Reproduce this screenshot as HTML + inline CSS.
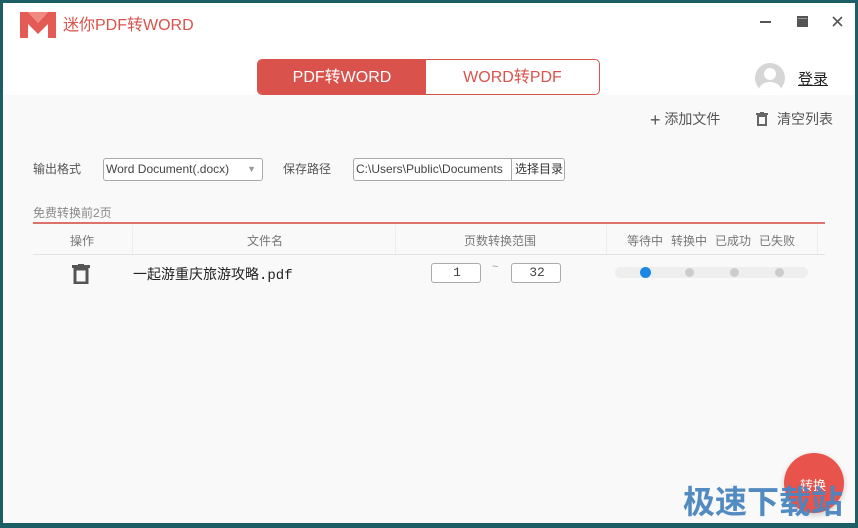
<!DOCTYPE html>
<html><head><meta charset="utf-8"><style>
*{margin:0;padding:0;box-sizing:border-box}
body{width:858px;height:528px;background:#1c5e66;font-family:"Liberation Sans","Noto Sans CJK SC",sans-serif;position:relative;overflow:hidden}
#win{position:absolute;left:3px;top:3px;width:852px;height:520px;background:#f9f9f9}
#top{position:absolute;left:0;top:0;width:852px;height:92px;background:#fff}
.a{position:absolute;white-space:nowrap}
.t{font-size:12px;color:#555}
.box{position:absolute;border:1px solid #aaa;border-radius:3px;background:#fff;font-size:12px;color:#444;line-height:20px;padding-left:2px;white-space:nowrap;overflow:hidden}
.dot{position:absolute;top:5px;width:10px;height:10px;border-radius:50%;background:#ccc}
</style></head><body><div id="win">
<div id="top">
 <svg class="a" style="left:17px;top:9px" width="36" height="26" viewBox="0 0 36 26"><path d="M0 0h8l10 11 10-11h8v26h-8V12l-10 10L8 12v14H0z" fill="#e45a54"/><path d="M8 0l10 11 10-11" fill="#f08a80"/></svg>
 <div class="a" style="left:60px;top:8px;font-size:16px;color:#d9524c">迷你PDF转WORD</div>
 <svg class="a" style="left:755px;top:12px" width="90" height="14"><rect x="2" y="6" width="11" height="2" fill="#555"/><rect x="39" y="1" width="11" height="11" fill="#555"/><rect x="40" y="3" width="9" height="1" fill="#999"/><path d="M75 2l9 9M84 2l-9 9" stroke="#555" stroke-width="1.6"/></svg>
 <div class="a" style="left:254px;top:56px;width:343px;height:36px;border:1px solid #d9534c;border-radius:5px;background:#fff;overflow:hidden">
  <div class="a" style="left:0;top:0;width:168px;height:34px;background:#d9534c;color:#fff;font-size:16px;text-align:center;line-height:36px">PDF转WORD</div>
  <div class="a" style="left:168px;top:0;width:173px;height:34px;color:#d9534c;font-size:16px;text-align:center;line-height:36px">WORD转PDF</div>
 </div>
 <div class="a" style="left:752px;top:60px;width:30px;height:30px;border-radius:50%;background:#d6d6d6;overflow:hidden"><div class="a" style="left:9px;top:5px;width:12px;height:12px;border-radius:50%;background:#fff"></div><div class="a" style="left:4px;top:19px;width:22px;height:16px;border-radius:50%;background:#fff"></div></div>
 <div class="a" style="left:795px;top:65px;font-size:15px;color:#222;text-decoration:underline">登录</div>
</div>
<div class="a" style="left:647px;top:106px;font-size:14px;color:#555"><span style="font-size:18px;color:#555;vertical-align:-2px">+</span> 添加文件</div>
<svg class="a" style="left:752px;top:109px" width="14" height="14"><rect x="1" y="1" width="12" height="2" fill="#666"/><rect x="5" y="0" width="4" height="2" fill="#666"/><path d="M3 4h8v9H3z" fill="none" stroke="#666" stroke-width="2"/></svg>
<div class="a" style="left:774px;top:106px;font-size:14px;color:#555">清空列表</div>
<div class="a t" style="left:30px;top:157px">输出格式</div>
<div class="box" style="left:100px;top:155px;width:160px;height:23px">Word Document(.docx)<span style="position:absolute;right:6px;top:0;color:#999;font-size:9px">▼</span></div>
<div class="a t" style="left:280px;top:157px">保存路径</div>
<div class="box" style="left:350px;top:155px;width:212px;height:23px">C:\Users\Public\Documents<span style="position:absolute;left:157px;top:0;width:54px;height:21px;border-left:1px solid #aaa;background:#fff;color:#333;padding-left:3px">选择目录</span></div>
<div class="a" style="left:30px;top:201px;font-size:12px;color:#888">免费转换前2页</div>
<div class="a" style="left:30px;top:219px;width:792px;height:2px;background:#d9736c"></div>
<div class="a" style="left:30px;top:251px;width:792px;height:1px;background:#e3e3e3"></div>
<div class="a" style="left:129px;top:222px;width:1px;height:29px;background:#eee"></div>
<div class="a" style="left:392px;top:222px;width:1px;height:29px;background:#eee"></div>
<div class="a" style="left:603px;top:222px;width:1px;height:29px;background:#eee"></div>
<div class="a" style="left:814px;top:222px;width:1px;height:29px;background:#eee"></div>
<div class="a t" style="left:67px;top:229px;color:#777">操作</div>
<div class="a t" style="left:244px;top:229px;color:#777">文件名</div>
<div class="a t" style="left:461px;top:229px;color:#777">页数转换范围</div>
<div class="a t" style="left:624px;top:229px;color:#777">等待中</div>
<div class="a t" style="left:668px;top:229px;color:#777">转换中</div>
<div class="a t" style="left:712px;top:229px;color:#777">已成功</div>
<div class="a t" style="left:756px;top:229px;color:#777">已失败</div>
<svg class="a" style="left:69px;top:261px" width="18" height="20"><rect x="0" y="1" width="18" height="3" fill="#555"/><rect x="6" y="0" width="6" height="2" fill="#555"/><path d="M3 5h12v14H3z" fill="none" stroke="#555" stroke-width="3"/></svg>
<div class="a" style="left:130px;top:261px;font-size:14px;color:#222;font-family:'Liberation Mono','Noto Sans CJK SC',monospace">一起游重庆旅游攻略.pdf</div>
<div class="box" style="left:428px;top:260px;width:50px;height:20px;text-align:center;line-height:18px;font-family:'Liberation Mono',monospace;font-size:13px">1</div>
<div class="a" style="left:489px;top:258px;font-size:11px;color:#999">~</div>
<div class="box" style="left:508px;top:260px;width:50px;height:20px;text-align:center;line-height:18px;font-family:'Liberation Mono',monospace;font-size:13px">32</div>
<div class="a" style="left:612px;top:264px;width:193px;height:11px;border-radius:6px;background:#eee">
 <div class="dot" style="left:25px;top:0;width:11px;height:11px;background:#1c87e4"></div>
 <div class="dot" style="left:70px;top:1px;width:9px;height:9px"></div>
 <div class="dot" style="left:115px;top:1px;width:9px;height:9px"></div>
 <div class="dot" style="left:160px;top:1px;width:9px;height:9px"></div>
</div>
<div class="a" style="left:781px;top:450px;width:60px;height:60px;border-radius:50%;background:#e8534c;box-shadow:0 2px 6px rgba(0,0,0,.2)"></div>
<div class="a" style="left:797px;top:472px;font-size:13px;color:#fff">转换</div>
<div class="a" style="left:680px;top:474px;font-size:32px;font-weight:bold;color:#4a86c0;opacity:.95">极速下载站</div>
</div></body></html>
